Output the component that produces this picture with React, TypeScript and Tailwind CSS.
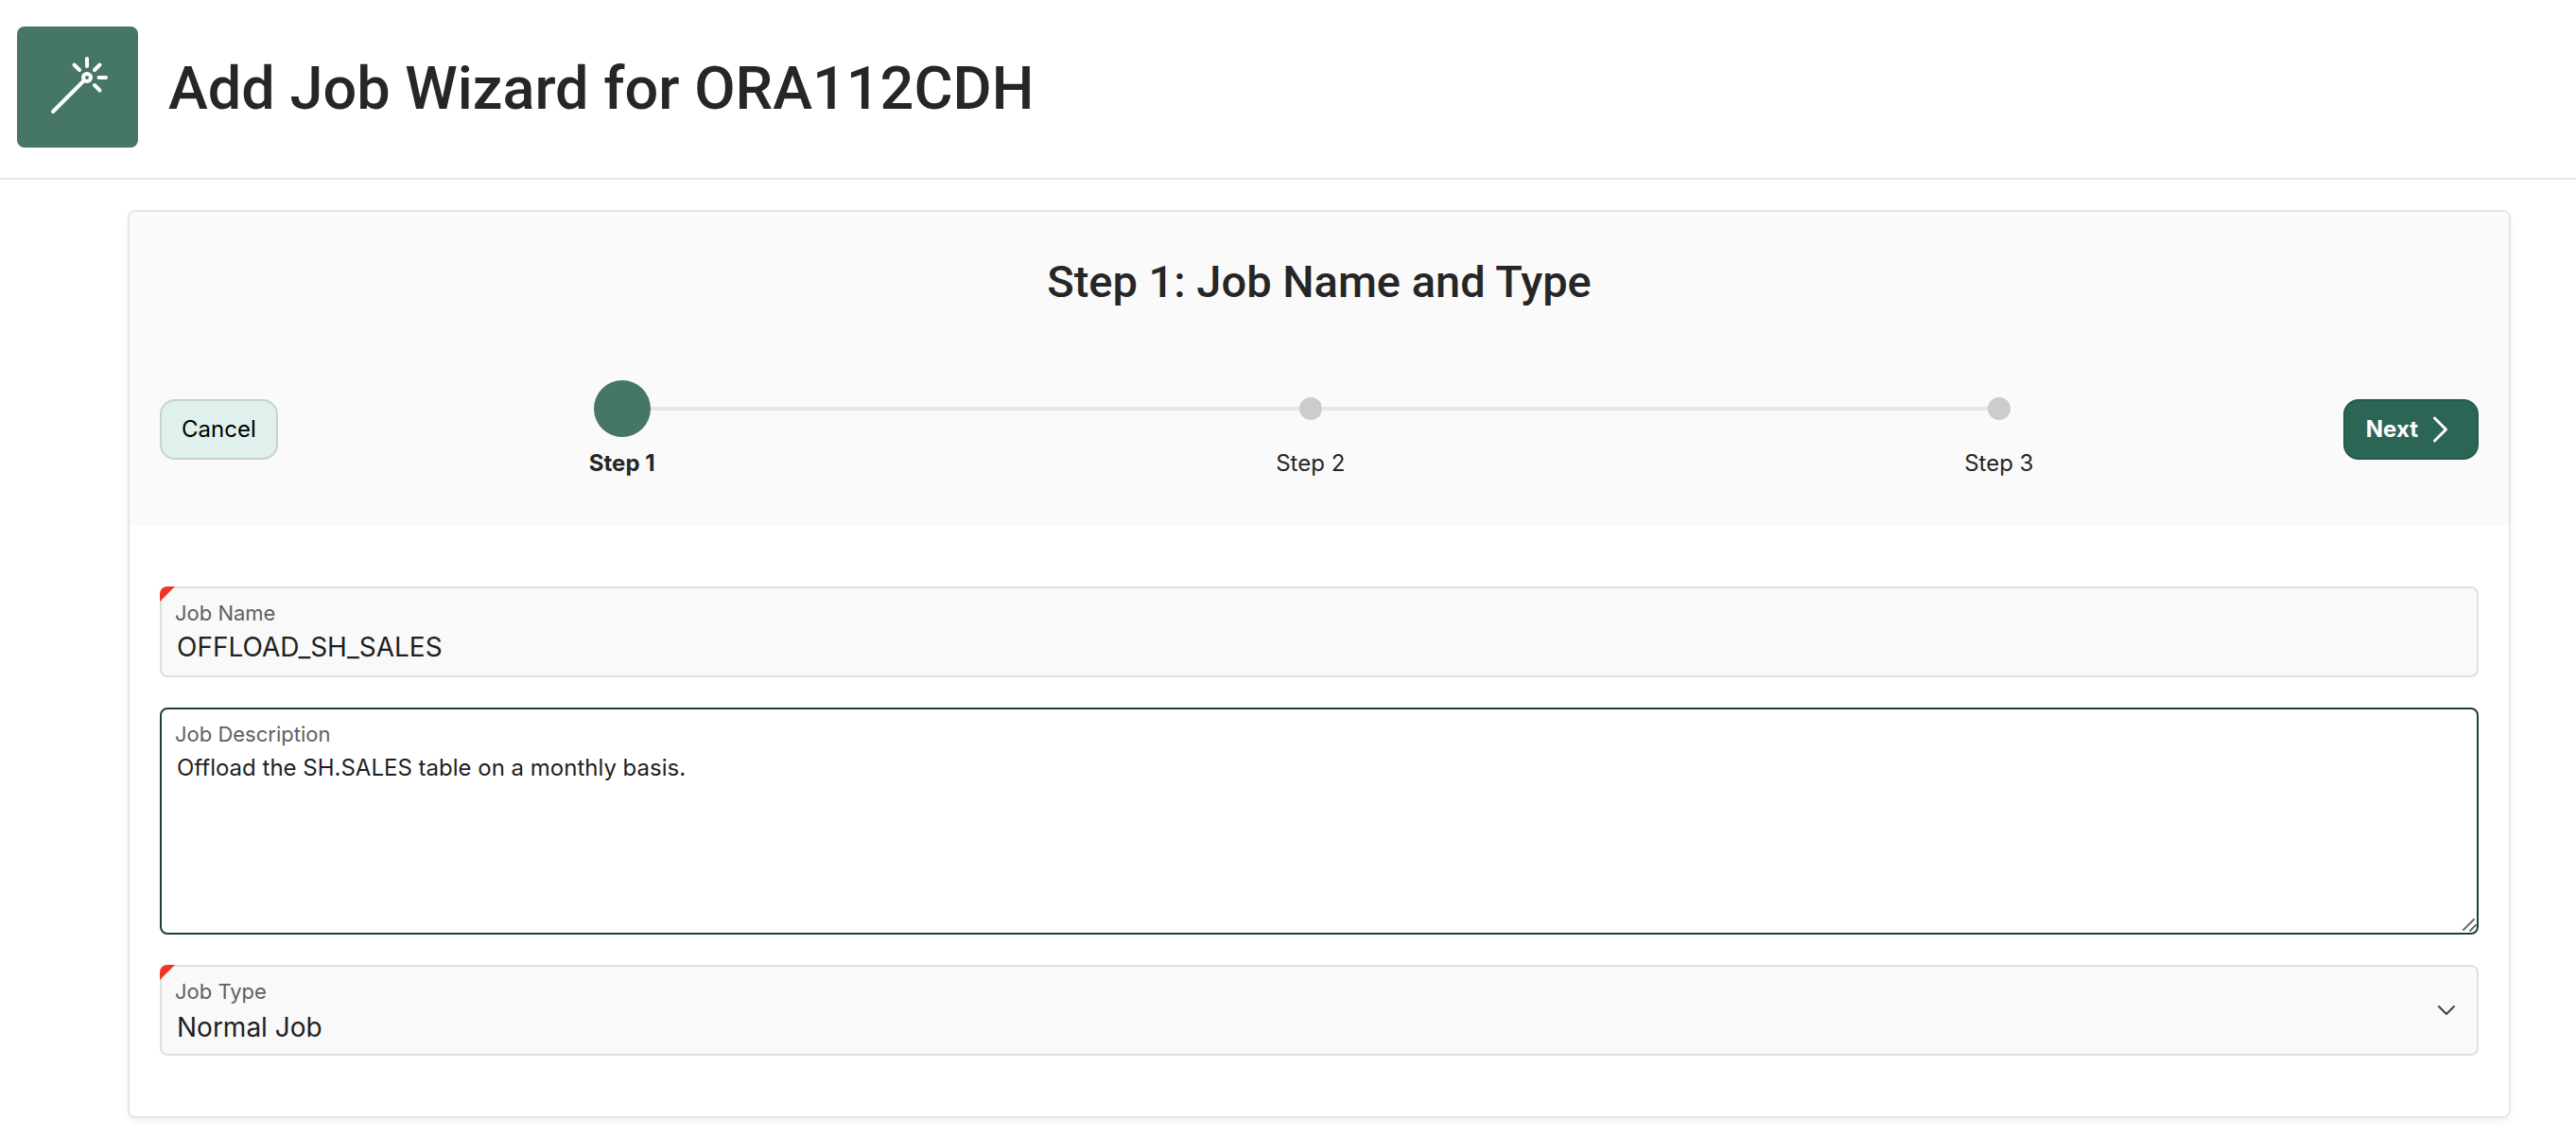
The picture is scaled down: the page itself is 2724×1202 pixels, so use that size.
import type { ReactNode } from "react";

const steps = [
  { label: "Step 1", current: true },
  { label: "Step 2", current: false },
  { label: "Step 3", current: false },
];

function WandIcon() {
  return (
    <svg viewBox="0 0 128 128" className="size-32" fill="none" stroke="#ffffff" strokeWidth="4" strokeLinecap="round" aria-hidden="true">
      <circle cx="74" cy="54" r="4" />
      <path d="M71 57 38 90M74 34v8M86.5 54h7.5M60.5 40.5l5.5 5.5M87.5 40.5l-5.5 5.5M82 62l5.5 5.5" />
    </svg>
  );
}

function Stepper() {
  return (
    <ol className="grid flex-1 grid-cols-3">
      {steps.map((step, i) => (
        <li key={step.label} className="flex flex-col items-center gap-3" aria-current={step.current ? "step" : undefined}>
          <div className="flex h-[60px] w-full items-center">
            <span className={i === 0 ? "h-1 flex-1" : "h-1 flex-1 bg-[#e6e6e6]"} />
            <span className={step.current ? "size-[60px] rounded-full bg-[#467665]" : "size-6 rounded-full bg-[#cccccc]"} />
            <span className={i === steps.length - 1 ? "h-1 flex-1" : "h-1 flex-1 bg-[#e6e6e6]"} />
          </div>
          <span className={step.current ? "text-2xl leading-8 font-bold" : "text-2xl leading-8"}>{step.label}</span>
        </li>
      ))}
    </ol>
  );
}

type FieldProps = { id: string; label: string; required?: boolean; className: string; children: ReactNode };

function Field({ id, label, required, className, children }: FieldProps) {
  return (
    <div className={"relative flex flex-col rounded-lg border-2 pt-3 " + className}>
      {required && (
        <span className="pointer-events-none absolute -inset-0.5 overflow-hidden rounded-lg">
          <span className="block size-4 bg-[#ee3524] [clip-path:polygon(0_0,100%_0,0_100%)]" />
        </span>
      )}
      <label htmlFor={id} className="px-3.5 text-[22px] leading-7 text-[#5f5f5f]">
        {label}
      </label>
      {children}
    </div>
  );
}

export default function App() {
  return (
    <div className="min-h-screen bg-white font-['Inter',sans-serif] text-[#262626]">
      <header className="flex items-center gap-8 border-b-2 border-[#e6e6e6] pt-7 pb-8 pl-[18px]">
        <div className="rounded-lg bg-[#467665]">
          <WandIcon />
        </div>
        <h1 className="pt-1 font-['Roboto',sans-serif] text-[63px] leading-[64px] font-medium">Add Job Wizard for ORA112CDH</h1>
      </header>

      <main className="pt-8 pr-[69px] pb-5 pl-[135px]">
        <section className="overflow-hidden rounded-lg border-2 border-[#e6e6e6] shadow-[0_4px_8px_-2px_rgba(0,0,0,0.08)]">
          <div className="bg-[#fafafa] px-8 pt-11 pb-[50px]">
            <h2 className="text-center font-['Roboto',sans-serif] text-[47px] leading-[60px] font-medium">Step 1: Job Name and Type</h2>
            <div className="mt-[74px] flex items-center">
              <button type="button" className="h-16 rounded-2xl border-2 border-[#c5d3cf] bg-[#e0f0ec] px-[21px] text-2xl leading-8 text-black">
                Cancel
              </button>
              <Stepper />
              <button type="button" className="flex h-16 items-center gap-2 rounded-2xl border-2 border-[#27594b] bg-[#2b6555] px-[22px] text-2xl leading-8 font-bold text-white">
                Next
                <svg viewBox="0 0 32 32" className="size-8" fill="none" stroke="currentColor" strokeWidth="3" strokeLinecap="round" strokeLinejoin="round" aria-hidden="true">
                  <path d="M9.5 4l12 12-12 12" />
                </svg>
              </button>
            </div>
          </div>

          <form className="flex flex-col gap-8 px-8 py-16">
            <Field id="job-name" label="Job Name" required className="h-24 border-[#dfdfdf] bg-[#f9f9f9]">
              <input id="job-name" type="text" defaultValue="OFFLOAD_SH_SALES" className="mt-1 h-9 w-full bg-transparent px-4 text-[28px] leading-9 text-[#1f1f1f] outline-none" />
            </Field>
            <Field id="job-description" label="Job Description" className="h-60 border-[#1a4234] bg-white">
              <textarea
                id="job-description"
                defaultValue="Offload the SH.SALES table on a monthly basis."
                className="mt-1 w-full flex-1 resize-none bg-transparent px-4 text-2xl leading-9 text-[#1f1f1f] outline-none"
              />
              <svg viewBox="0 0 16 16" className="pointer-events-none absolute right-0 bottom-0 size-4" fill="none" stroke="#6b6b6b" strokeWidth="2" strokeLinecap="round" aria-hidden="true">
                <path d="M2 13 13 2M9 14 15 8" />
              </svg>
            </Field>
            <Field id="job-type" label="Job Type" required className="h-24 border-[#dfdfdf] bg-[#f9f9f9]">
              <select id="job-type" defaultValue="Normal Job" className="mt-1 h-10 w-full appearance-none bg-transparent px-4 text-[28px] leading-10 text-[#1f1f1f] outline-none">
                <option>Normal Job</option>
              </select>
              <svg viewBox="0 0 24 24" className="pointer-events-none absolute top-[34px] right-5 size-6" fill="none" stroke="#404040" strokeWidth="2" strokeLinecap="round" strokeLinejoin="round" aria-hidden="true">
                <path d="M4 8l8 8 8-8" />
              </svg>
            </Field>
          </form>
        </section>
      </main>
    </div>
  );
}
